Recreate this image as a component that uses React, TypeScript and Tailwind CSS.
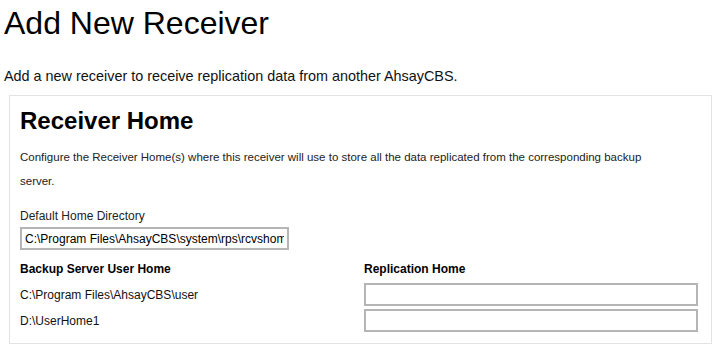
import React from 'react';

const homes = ['C:\\Program Files\\AhsayCBS\\user', 'D:\\UserHome1'];

export default function App() {
    return (
        <div className="min-h-[355px] bg-white px-1 pt-[5px] font-['Liberation_Sans',Arial,sans-serif] text-black">
            <h1 className="text-[32px] leading-9">Add New Receiver</h1>
            <p className="mt-[25px] text-[14.4px] leading-5 text-[#111]">
                Add a new receiver to receive replication data from another AhsayCBS.
            </p>

            <div className="ml-[5px] mt-[9px] w-[703px] border border-[#e3e3e3] px-[10px] pb-[11px] pt-[11px]">
                <h2 className="text-[24px] font-bold leading-7">Receiver Home</h2>
                <p className="mt-[10px] max-w-[650px] text-[11.5px] leading-6 text-[#222]">
                    Configure the Receiver Home(s) where this receiver will use to store all the data replicated from the corresponding backup server.
                </p>

                <div className="mt-[15px] text-xs leading-4 text-[#222]">Default Home Directory</div>
                <input
                    readOnly
                    value="C:\Program Files\AhsayCBS\system\rps\rcvshome"
                    className="mt-[3px] block h-[23px] w-[269px] border-2 border-[#b5b5b5] px-[3px] text-xs text-black outline-none"
                />

                <div className="mt-[11px] grid grid-cols-[344px_334px] text-xs font-bold leading-4">
                    <div>Backup Server User Home</div>
                    <div>Replication Home</div>
                </div>

                <div className="mt-[6px] flex flex-col gap-[3px]">
                    {homes.map(h => (
                        <div key={h} className="grid grid-cols-[344px_334px] items-center text-xs">
                            <div className="text-[#111]">{h}</div>
                            <input
                                readOnly
                                value=""
                                className="block h-[23px] w-full border-2 border-[#b5b5b5] px-[3px] text-xs outline-none"
                            />
                        </div>
                    ))}
                </div>
            </div>
        </div>
    );
}
